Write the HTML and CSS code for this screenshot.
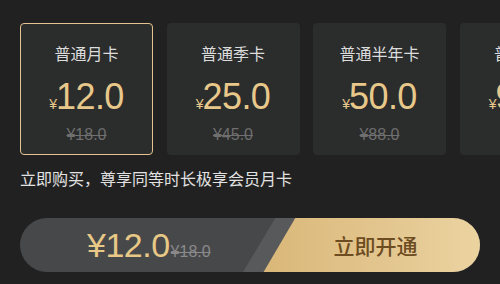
FILE: index.html
```html
<!DOCTYPE html>
<html lang="zh-CN">
<head>
<meta charset="utf-8">
<title>会员开通</title>
<link rel="stylesheet" href="styles.css">
</head>
<body>
<div class="page">
  <div class="cards">
    <div class="card selected">
      <div class="card-title">普通月卡</div>
      <div class="card-price"><span class="yen">¥</span><span class="num">12.0</span></div>
      <div class="card-old">¥18.0</div>
    </div>
    <div class="card">
      <div class="card-title">普通季卡</div>
      <div class="card-price"><span class="yen">¥</span><span class="num">25.0</span></div>
      <div class="card-old">¥45.0</div>
    </div>
    <div class="card">
      <div class="card-title">普通半年卡</div>
      <div class="card-price"><span class="yen">¥</span><span class="num">50.0</span></div>
      <div class="card-old">¥88.0</div>
    </div>
    <div class="card">
      <div class="card-title">普通年卡</div>
      <div class="card-price"><span class="yen">¥</span><span class="num">98.0</span></div>
      <div class="card-old">¥168.0</div>
    </div>
  </div>
  <div class="desc">立即购买，尊享同等时长极享会员月卡</div>
  <div class="bar">
    <div class="bar-price"><span class="bar-now">¥12.0</span><span class="bar-old">¥18.0</span></div>
    <div class="bar-btn"><span class="bar-btn-text">立即开通</span></div>
  </div>
</div>
</body>
</html>
```
FILE: styles.css
```css
html, body {
  margin: 0;
  padding: 0;
  background: #212121;
}
body {
  width: 500px;
  height: 284px;
  overflow: hidden;
  font-family: "Liberation Sans", "Noto Sans CJK SC", sans-serif;
}
.page {
  padding: 23px 0 0 20px;
}
.cards {
  display: flex;
  gap: 13.5px;
  width: 480px;
  overflow: hidden;
}
.card {
  flex: 0 0 133px;
  height: 132px;
  box-sizing: border-box;
  border: 1.5px solid transparent;
  border-radius: 4px;
  background: #2b2c2c;
  display: flex;
  flex-direction: column;
  align-items: center;
  padding-top: 18px;
}
.card.selected {
  border-color: #e3c48e;
}
.card-title {
  font-family: "Noto Sans CJK SC", sans-serif;
  font-size: 16px;
  line-height: 22px;
  color: #dcdcdc;
}
.card-price {
  margin-top: 15px;
  display: flex;
  align-items: baseline;
  color: #e8c88a;
  line-height: 36px;
}
.yen {
  font-size: 14px;
  margin-right: -1px;
}
.num {
  font-size: 36px;
  letter-spacing: -0.6px;
}
.card-old {
  margin-top: 4px;
  font-size: 16px;
  line-height: 18px;
  color: #6f6f6f;
  text-decoration: line-through;
}
.desc {
  margin-top: 12px;
  font-family: "Noto Sans CJK SC", sans-serif;
  font-size: 16px;
  line-height: 22px;
  color: #e2e2e2;
}
.bar {
  margin-top: 29px;
  width: 460px;
  height: 54px;
  border-radius: 27px;
  overflow: hidden;
  background: #47484a;
  display: flex;
}
.bar-price {
  flex: 1;
  display: flex;
  align-items: baseline;
  padding-left: 67px;
  padding-top: 8px;
}
.bar-now {
  font-size: 34px;
  line-height: 38px;
  color: #e8c886;
  letter-spacing: -0.5px;
}
.bar-old {
  font-size: 16px;
  color: #8a8a8a;
  text-decoration: line-through;
  margin-left: 1px;
}
.bar-btn {
  position: relative;
  flex: 0 0 237px;
  background: #58595b;
  clip-path: polygon(32.3px 0, 100% 0, 100% 100%, 0 100%);
  display: flex;
  align-items: center;
  justify-content: center;
  padding-left: 28px;
  box-sizing: border-box;
}
.bar-btn::before {
  content: "";
  position: absolute;
  inset: 0;
  background: linear-gradient(90deg, #d8b575, #e3c68f 60%, #ebd3a0);
  clip-path: polygon(52.3px 0, 100% 0, 100% 100%, 20.6px 100%);
}
.bar-btn-text {
  position: relative;
  font-family: "Noto Sans CJK SC", sans-serif;
  font-size: 21px;
  font-weight: 500;
  color: #6d4c22;
  line-height: 28px;
}
```
